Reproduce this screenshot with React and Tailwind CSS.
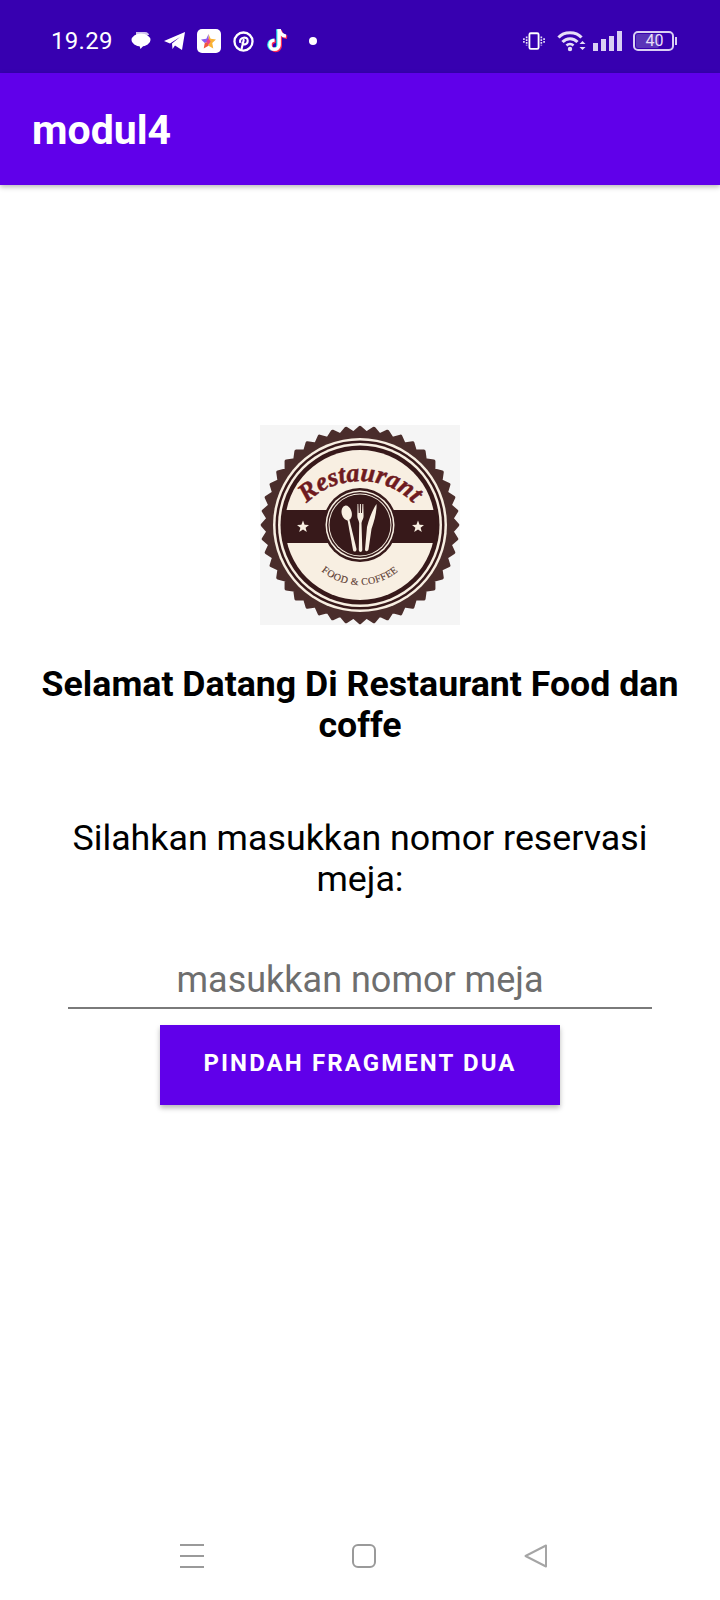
const roboto = { fontFamily: 'Roboto, sans-serif' };

function Teeth() {
  // gerigi luar logo
  const pts = [];
  const n = 44;
  for (let i = 0; i < n * 2; i++) {
    const a = (i / (n * 2)) * Math.PI * 2;
    const r = i % 2 === 0 ? 97.5 : 92;
    pts.push(`${(100 + r * Math.cos(a)).toFixed(2)},${(100 + r * Math.sin(a)).toFixed(2)}`);
  }
  return <polygon points={pts.join(' ')} fill="#4a2d2b" stroke="#4a2d2b" strokeWidth="3.5" strokeLinejoin="round" />;
}

function Logo() {
  return (
    <svg viewBox="0 0 200 200" className="w-[200px] h-[200px] bg-[#f5f5f5] block">
      <defs>
        <clipPath id="dalam">
          <circle cx="100" cy="100" r="76" />
        </clipPath>
        <path id="atas" d="M 47 78 A 75 75 0 0 1 153 78" />
        <path id="bawah" d="M 40 100 A 60 60 0 0 0 160 100" />
      </defs>
      <Teeth />
      <circle cx="100" cy="100" r="87" fill="#f8efe2" />
      <circle cx="100" cy="100" r="84.5" fill="#37191a" />
      <circle cx="100" cy="100" r="82" fill="#f8efe2" />
      <circle cx="100" cy="100" r="79.5" fill="#37191a" />
      <circle cx="100" cy="100" r="75" fill="#f8efe2" />
      <rect x="20" y="85" width="160" height="33" fill="#37191a" clipPath="url(#dalam)" />
      <circle cx="100" cy="100" r="37" fill="#37191a" />
      <circle cx="100" cy="100" r="34.5" fill="#f8efe2" />
      <circle cx="100" cy="100" r="33" fill="#37191a" />
      <circle cx="100" cy="100" r="31.5" fill="#f8efe2" />
      <circle cx="100" cy="100" r="30.5" fill="#37191a" />
      <text fontFamily="'Liberation Serif', serif" fontStyle="italic" fontWeight="700" fontSize="26" fill="#6e1a20" stroke="#6e1a20" strokeWidth="0.5">
        <textPath href="#atas" startOffset="50%" textAnchor="middle">Restaurant</textPath>
      </text>
      <text fontFamily="'Liberation Serif', serif" fontSize="10" fill="#5f3f36" stroke="#5f3f36" strokeWidth="0.15" letterSpacing="0.5">
        <textPath href="#bawah" startOffset="50%" textAnchor="middle">FOOD &amp; COFFEE</textPath>
      </text>
      <polygon points="43,95.5 44.6,99.7 49,99.9 45.6,102.7 46.8,107 43,104.5 39.2,107 40.4,102.7 37,99.9 41.4,99.7" fill="#f8efe2" />
      <polygon points="158,95.5 159.6,99.7 164,99.9 160.6,102.7 161.8,107 158,104.5 154.2,107 155.4,102.7 152,99.9 156.4,99.7" fill="#f8efe2" />
      {/* sendok */}
      <ellipse cx="86.7" cy="88" rx="5" ry="7.5" fill="#f8efe2" transform="rotate(-14 86.7 88)" />
      <path d="M87.5 95 L89.5 95 L96.5 124 C96.8 127 93.5 127.5 93 125 Z" fill="#f8efe2" />
      {/* garpu */}
      <path d="M97.5 79 L98.3 79 L98.7 88 L99.8 88 L99.9 79 L100.9 79 L101 88 L102 88 L102.4 79 L103.3 79 L103.6 91 C103.6 94 102 95 101.5 98 L102.3 125 C102 127.5 99 127.5 98.8 125 L99.2 98 C98.8 95 97.3 94 97.3 91 Z" fill="#f8efe2" />
      {/* pisau */}
      <path d="M116.5 79 C117 85 114.5 96 111.5 104 L108.5 124.5 C107.8 127 105 126.5 105 124.5 L107 102 C109.5 92 113 84 116.5 79 Z" fill="#f8efe2" />
    </svg>
  );
}

function StatusIcons() {
  return (
    <div className="flex items-center">
      <svg viewBox="0 0 22 20" className="w-[22px] h-[20px] ml-[17px]">
        <path d="M6 1 H15 C18 1 19 3 19 4 L6 4 Z" fill="#cfc3ec" />
        <ellipse cx="11" cy="9" rx="9.5" ry="6.5" fill="#fff" />
        <path d="M9 13 L14 14 L10.5 18 Z" fill="#fff" />
      </svg>
      <svg viewBox="0 0 24 20" className="w-[24px] h-[20px] ml-[11px]">
        <path d="M1 10 L22 1 L19 19 L12 14.5 L9.5 18 L9 12.5 L17 6 L7 12.5 Z" fill="#fff" />
      </svg>
      <div className="w-[24px] h-[24px] ml-[10px] bg-white rounded-[5px] flex items-center justify-center">
        <svg viewBox="0 0 16 16" className="w-[17px] h-[17px]">
          <path d="M8 1 L10 5.5 L15 6 L11.5 9.5 L12.5 14.5 L8 12 Z" fill="#f9b233" />
          <path d="M8 1 L6 5.5 L1 6 L4.5 9.5 L8 8 Z" fill="#8a5cf0" />
          <path d="M4.5 9.5 L3.5 14.5 L8 12 L8 8 Z" fill="#f0563d" />
          <path d="M8 5 L10 8 L8 11 L6 8 Z" fill="#e8418f" />
        </svg>
      </div>
      <svg viewBox="0 0 20 20" className="w-[21px] h-[21px] ml-[12px]">
        <circle cx="10" cy="10" r="8.6" fill="none" stroke="#fff" strokeWidth="2.2" />
        <path d="M8.2 17 L10.2 8.5 M6.8 10.5 C6 6 13.8 4.5 14 9 C14.2 13 9.8 13.8 9 11.5" fill="none" stroke="#fff" strokeWidth="2" strokeLinecap="round" />
      </svg>
      <svg viewBox="2 0 19 24.5" className="w-[22px] h-[28px] ml-[13px]">
        <path d="M12.5 2 V15.5 A4 4 0 1 1 8.5 11.5" fill="none" stroke="#25f4ee" strokeWidth="3" transform="translate(-1 0)" />
        <path d="M12.5 2 C13 5.5 15 7.5 18.5 8" fill="none" stroke="#25f4ee" strokeWidth="3" transform="translate(-1 0)" />
        <path d="M12.5 2 V15.5 A4 4 0 1 1 8.5 11.5" fill="none" stroke="#fe2c55" strokeWidth="3" transform="translate(1 1)" />
        <path d="M12.5 2 C13 5.5 15 7.5 18.5 8" fill="none" stroke="#fe2c55" strokeWidth="3" transform="translate(1 1)" />
        <path d="M12.5 2 V15.5 A4 4 0 1 1 8.5 11.5" fill="none" stroke="#fff" strokeWidth="3" />
        <path d="M12.5 2 C13 5.5 15 7.5 18.5 8" fill="none" stroke="#fff" strokeWidth="3" />
      </svg>
      <div className="w-[8px] h-[8px] rounded-full bg-white ml-[20px]" />
    </div>
  );
}

function SystemIcons() {
  return (
    <div className="flex items-center">
      <svg viewBox="0 0 24 20" className="w-[22px] h-[20px]">
        <rect x="7" y="1.5" width="10" height="17" rx="1.5" fill="none" stroke="#fff" strokeWidth="2" />
        <path d="M4 5 V15 M1 7 V13 M20 5 V15 M23 7 V13" stroke="#e6def8" strokeWidth="1.8" strokeDasharray="2 1" />
      </svg>
      <svg viewBox="0 0 30 22" className="w-[30px] h-[22px] ml-[12px]">
        <path d="M1.5 7.5 C7 1 19 1 24.5 7.5" fill="none" stroke="#e6def8" strokeWidth="3" />
        <path d="M5.5 12 C9.5 7.5 16.5 7.5 20.5 12" fill="none" stroke="#e6def8" strokeWidth="3" />
        <path d="M9.5 15.5 C11.5 13.5 14.5 13.5 16.5 15.5" fill="none" stroke="#e6def8" strokeWidth="2.6" />
        <circle cx="13" cy="19" r="2.2" fill="#e6def8" />
        <path d="M22.5 14 L25.5 11 L28.5 14 Z M22.5 17 L25.5 20 L28.5 17 Z" fill="#e6def8" />
      </svg>
      <div className="flex items-end gap-[3px] ml-[6px] h-[20px]">
        <div className="w-[5px] h-[8px] bg-[#d9cff3]" />
        <div className="w-[5px] h-[12px] bg-[#d9cff3]" />
        <div className="w-[5px] h-[15px] bg-[#d9cff3]" />
        <div className="w-[5px] h-[20px] bg-[#d9cff3]" />
      </div>
      <div className="w-[41px] h-[20px] ml-[11px] border-2 border-[#d9cff3] rounded-[5px] p-[1px] flex">
        <div className="w-[23px] bg-[#5a35b8] rounded-[2px]" />
        <span className="absolute w-[37px] text-center text-[16px] leading-[14px] text-[#e6def8]" style={roboto}>40</span>
      </div>
      <div className="w-[2px] h-[8px] bg-[#d9cff3] ml-[1px]" />
    </div>
  );
}

export default function App() {
  return (
    <div className="w-[720px] h-[1600px] bg-white flex flex-col" style={roboto}>
      <div className="h-[73px] bg-[#3700b0] flex items-center justify-between pl-[51px] pr-[43px] pt-[9px] shrink-0">
        <div className="flex items-center">
          <span className="text-white text-[24px] leading-none tracking-[0.3px]">19.29</span>
          <StatusIcons />
        </div>
        <SystemIcons />
      </div>

      <div className="h-[112px] bg-[#6000ea] flex items-center pl-[32px] pt-[2px] shadow-[0_2px_5px_rgba(0,0,0,0.28)] shrink-0">
        <h1 className="text-white text-[41px] font-bold leading-none">modul4</h1>
      </div>

      <div className="flex-1 flex flex-col items-center pt-[240px]">
        <Logo />
        <h2 className="text-black font-bold text-[35.7px] leading-[41px] text-center w-[680px] mt-[39px]">
          Selamat Datang Di Restaurant Food dan coffe
        </h2>
        <p className="text-black text-[35.8px] leading-[41px] text-center w-[600px] mt-[72px]">
          Silahkan masukkan nomor reservasi meja:
        </p>
        <input
          readOnly
          placeholder="masukkan nomor meja"
          className="w-[584px] h-[56px] mt-[53px] text-center text-[36px] leading-none border-b-2 border-[#7a7a7a] outline-none placeholder:text-[#6e6e6e]"
        />
        <button className="w-[400px] h-[80px] mt-[16px] pb-[5px] bg-[#6000ea] text-white text-[24px] font-bold tracking-[2.1px] shadow-[0_3px_5px_rgba(0,0,0,0.28)]">
          PINDAH FRAGMENT DUA
        </button>
      </div>

      <div className="h-[96px] flex items-start justify-center pt-[40px] pl-[7px] shrink-0">
        <div className="w-[24px] h-[24px] flex flex-col justify-between">
          <div className="h-[2px] bg-[#9a9a9a]" />
          <div className="h-[2px] bg-[#9a9a9a]" />
          <div className="h-[2px] bg-[#9a9a9a]" />
        </div>
        <div className="w-[24px] h-[24px] ml-[148px] border-2 border-[#9a9a9a] rounded-[6px]" />
        <svg viewBox="0 0 24 24" className="w-[24px] h-[24px] ml-[148px]">
          <path d="M1.5 12 L22 1.5 V22.5 Z" fill="none" stroke="#a5a5a5" strokeWidth="2" strokeLinejoin="round" />
        </svg>
      </div>
    </div>
  );
}
